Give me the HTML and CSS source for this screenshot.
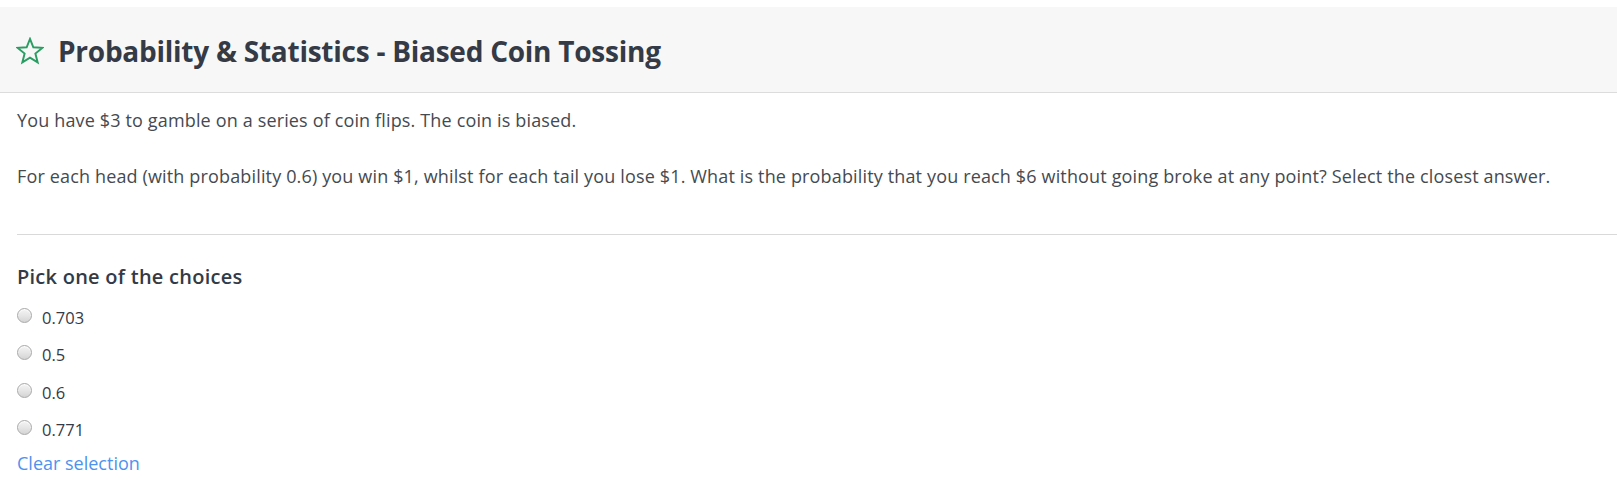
FILE: index.html
```html
<!DOCTYPE html>
<html lang="en">
<head>
<meta charset="utf-8">
<title>Probability &amp; Statistics - Biased Coin Tossing</title>
<link rel="stylesheet" href="styles.css">
</head>
<body>
<header class="qhead">
  <svg class="star" viewBox="0 0 26 26" width="28" height="28" aria-hidden="true">
    <polygon points="13,1.8 16.1,9.6 24.4,10.1 18,15.4 20.1,23.6 13,19.1 5.9,23.6 8,15.4 1.6,10.1 9.9,9.6" fill="none" stroke="#2a9d62" stroke-width="1.8" stroke-linejoin="miter"/>
  </svg>
  <h1 class="title">Probability &amp; Statistics - Biased Coin Tossing</h1>
</header>
<main class="content">
  <section class="question">
    <p class="para">You have $3 to gamble on a series of coin flips. The coin is biased.</p>
    <p class="para">For each head (with probability 0.6) you win $1, whilst for each tail you lose $1. What is the probability that you reach $6 without going broke at any point? Select the closest answer.</p>
  </section>
  <hr class="divider">
  <section class="choices">
    <h2 class="choices-title">Pick one of the choices</h2>
    <label class="choice"><input type="radio" name="c" class="radio"><span>0.703</span></label>
    <label class="choice"><input type="radio" name="c" class="radio"><span>0.5</span></label>
    <label class="choice"><input type="radio" name="c" class="radio"><span>0.6</span></label>
    <label class="choice"><input type="radio" name="c" class="radio"><span>0.771</span></label>
    <a class="clear" href="#">Clear selection</a>
  </section>
</main>
</body>
</html>
```
FILE: styles.css
```css
html, body {
  margin: 0;
  padding: 0;
  background: #ffffff;
}
body {
  font-family: "Open Sans", "Noto Sans", sans-serif;
  color: #454a50;
}
.qhead {
  margin-top: 7px;
  height: 86px;
  box-sizing: border-box;
  background: #f7f7f7;
  border-bottom: 1px solid #dcdcdc;
  display: flex;
  align-items: center;
  padding: 0 0 0 16px;
  gap: 14px;
}
.star {
  flex: none;
  margin-top: 3px;
}
.title {
  margin: 2px 0 0 0;
  font-size: 28px;
  font-weight: 700;
  color: #343a46;
  line-height: 36px;
  letter-spacing: -0.25px;
}
.content {
  padding: 14px 0 0 17px;
}
.para {
  margin: 0 0 29px 0;
  font-size: 18px;
  line-height: 27px;
  letter-spacing: 0.15px;
}
.para:last-child {
  margin-bottom: 0;
}
.divider {
  margin: 44px 0 0 0;
  border: 0;
  border-top: 1px solid #d9d9d9;
  height: 0;
}
.choices {
  padding-top: 28px;
  display: flex;
  flex-direction: column;
  align-items: flex-start;
}
.choices-title {
  margin: 0 0 15px 0;
  font-size: 20px;
  font-weight: 600;
  line-height: 28px;
  letter-spacing: 0.25px;
  color: #343a46;
}
.choice {
  display: flex;
  align-items: flex-start;
  gap: 10px;
  height: 24px;
  font-size: 16.5px;
  line-height: 24px;
  color: #343a46;
  margin-bottom: 13.3px;
}
.choice:last-of-type {
  margin-bottom: 8px;
}
.radio {
  appearance: none;
  -webkit-appearance: none;
  margin: 2px 0 0 0;
  width: 15px;
  height: 15px;
  border-radius: 50%;
  border: 1px solid #a9a9a9;
  box-sizing: border-box;
  background: linear-gradient(180deg, #f4f4f4 0%, #e6e6e6 50%, #d4d4d4 100%);
  box-shadow: inset 0 1px 1px rgba(255,255,255,0.9);
}
.clear {
  font-size: 18px;
  line-height: 27px;
  color: #4e92f0;
  text-decoration: none;
}
```
